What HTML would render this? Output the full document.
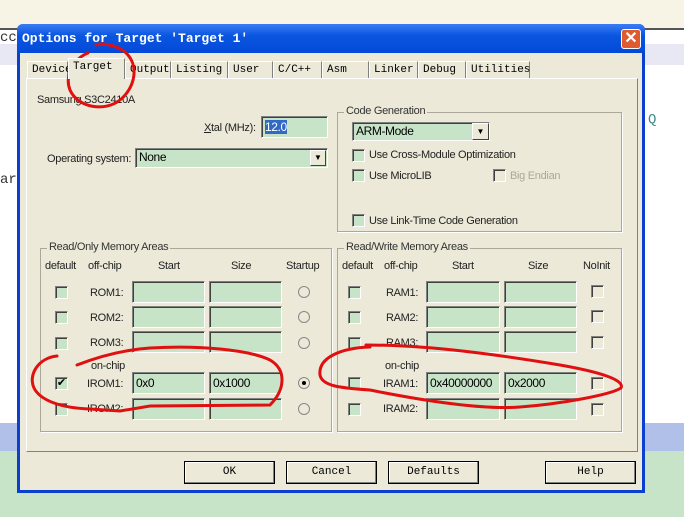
<!DOCTYPE html><html><head><meta charset="utf-8"><style>
*{margin:0;padding:0;box-sizing:border-box}
body{width:684px;height:517px;overflow:hidden;position:relative;background:#fff;font-family:"Liberation Sans",sans-serif;font-size:11px;color:#000}
.a{position:absolute}
.mono{font-family:"Liberation Mono",monospace}
.fld{position:absolute;background:#c8e4c8;border-top:1px solid #808080;border-left:1px solid #808080;border-right:1px solid #fff;border-bottom:1px solid #fff;box-shadow:inset 1px 1px 0 #404040;height:22px;padding:3px 3px;font-size:12px;letter-spacing:-0.4px}
.cb{position:absolute;width:13px;height:13px;background:#c8e4c8;border:1px solid #808080;border-right-color:#fff;border-bottom-color:#fff;box-shadow:inset 1px 1px 0 #404040}
.rd{position:absolute;width:12px;height:12px;border-radius:50%;border:1px solid #888;background:#ece9d8}
.grp{position:absolute;border:1px solid #aca899;box-shadow:1px 1px 0 #fff}
.gl{position:absolute;top:-8px;left:6px;background:#ece9d8;padding:0 2px;color:#333;letter-spacing:-0.3px}
.tab{position:absolute;top:61px;height:17px;border:1px solid #fff;border-right:1px solid #808080;border-bottom:none;font-family:"Liberation Mono",monospace;font-size:11px;padding:2px 4px;background:#ece9d8}
.btn{position:absolute;top:461px;width:91px;height:23px;border:1px solid #000;box-shadow:inset -1px -1px 0 #808080,inset 1px 1px 0 #fff;background:#ece9d8;font-family:"Liberation Mono",monospace;text-align:center;line-height:21px}
.lb{position:absolute;font-size:11px;color:#222;letter-spacing:-0.3px}
</style></head><body>
<div class="a" style="left:0;top:0;width:684px;height:28px;background:#f7f4e6"></div>
<div class="a" style="left:0;top:28px;width:684px;height:2px;background:#555"></div>
<div class="a" style="left:0;top:44px;width:684px;height:21px;background:#e8e8f4"></div>
<div class="a mono" style="left:0;top:30px;font-size:14px;color:#333">cc</div>
<div class="a mono" style="left:0;top:172px;font-size:14px;color:#333">ar</div>
<div class="a mono" style="left:648px;top:112px;font-size:14px;color:#3a8a8a">Q</div>
<div class="a" style="left:0;top:423px;width:684px;height:28px;background:#b0c0e8"></div>
<div class="a" style="left:0;top:451px;width:684px;height:66px;background:#c8e4c8"></div>
<div class="a" style="left:17px;top:24px;width:628px;height:469px;background:#0a3fd0;border-radius:6px 6px 0 0"></div>
<div class="a" style="left:17px;top:24px;width:628px;height:29px;background:linear-gradient(#3b7cf4,#0a56e0 40%,#0349d8);border-radius:6px 6px 0 0"></div>
<div class="a mono" style="left:22px;top:31px;color:#fff;font-weight:bold;font-size:13px">Options for Target 'Target 1'</div>
<div class="a" style="left:621px;top:29px;width:20px;height:20px;background:#e05a30;border:1px solid #fff;border-radius:3px;color:#fff;font-size:16px;line-height:18px;text-align:center;font-weight:bold">✕</div>
<div class="a" style="left:20px;top:53px;width:622px;height:437px;background:#ece9d8"></div>
<div class="a" style="left:26px;top:78px;width:612px;height:374px;border:1px solid #fff;border-right-color:#808080;border-bottom-color:#808080"></div>
<div class="tab" style="left:27px;width:41px">Device</div>
<div class="tab" style="left:68px;top:58px;height:21px;width:57px;z-index:2">Target</div>
<div class="tab" style="left:125px;width:46px">Output</div>
<div class="tab" style="left:171px;width:57px">Listing</div>
<div class="tab" style="left:228px;width:45px">User</div>
<div class="tab" style="left:273px;width:49px">C/C++</div>
<div class="tab" style="left:322px;width:47px">Asm</div>
<div class="tab" style="left:369px;width:49px">Linker</div>
<div class="tab" style="left:418px;width:48px">Debug</div>
<div class="tab" style="left:466px;width:64px">Utilities</div>
<div class="lb" style="left:37px;top:94px">Samsung S3C2410A</div>
<div class="lb" style="left:204px;top:122px"><u>X</u>tal (MHz):</div>
<div class="fld" style="left:261px;top:116px;width:67px"><span style="background:#316ac5;color:#fff">12.0</span></div>
<div class="lb" style="left:47px;top:153px">Operating system:</div>
<div class="fld" style="left:135px;top:148px;width:193px;height:20px;padding:1px 3px">None</div>
<div class="a" style="left:310px;top:150px;width:16px;height:16px;background:#ece9d8;border:1px solid #fff;border-right-color:#404040;border-bottom-color:#404040;font-size:8px;text-align:center;line-height:14px">▼</div>
<div class="grp" style="left:337px;top:112px;width:285px;height:120px"><span class="gl">Code Generation</span></div>
<div class="fld" style="left:352px;top:122px;width:138px;height:19px;padding:1px 3px">ARM-Mode</div>
<div class="a" style="left:472px;top:123px;width:17px;height:17px;background:#ece9d8;border:1px solid #fff;border-right-color:#404040;border-bottom-color:#404040;font-size:8px;text-align:center;line-height:15px">▼</div>
<div class="cb" style="left:352px;top:149px"></div><div class="lb" style="left:369px;top:149px">Use Cross-Module Optimization</div>
<div class="cb" style="left:352px;top:169px"></div><div class="lb" style="left:369px;top:170px">Use MicroLIB</div>
<div class="cb" style="left:493px;top:169px;background:#ece9d8"></div><div class="lb" style="left:510px;top:170px;color:#aca899">Big Endian</div>
<div class="cb" style="left:352px;top:214px"></div><div class="lb" style="left:369px;top:215px">Use Link-Time Code Generation</div>
<div class="grp" style="left:40px;top:248px;width:292px;height:184px"><span class="gl">Read/Only Memory Areas</span></div>
<div class="lb" style="left:45px;top:260px">default</div><div class="lb" style="left:88px;top:260px">off-chip</div><div class="lb" style="left:158px;top:260px">Start</div><div class="lb" style="left:231px;top:260px">Size</div><div class="lb" style="left:286px;top:260px">Startup</div>
<div class="grp" style="left:337px;top:248px;width:285px;height:184px"><span class="gl">Read/Write Memory Areas</span></div>
<div class="lb" style="left:342px;top:260px">default</div><div class="lb" style="left:384px;top:260px">off-chip</div><div class="lb" style="left:452px;top:260px">Start</div><div class="lb" style="left:528px;top:260px">Size</div><div class="lb" style="left:583px;top:260px">NoInit</div>
<div class="cb" style="left:55px;top:286px"></div><div class="lb" style="left:90px;top:287px">ROM1:</div><div class="fld" style="left:132px;top:281px;width:73px"></div><div class="fld" style="left:209px;top:281px;width:73px"></div><div class="rd" style="left:298px;top:286px"></div>
<div class="cb" style="left:55px;top:311px"></div><div class="lb" style="left:90px;top:312px">ROM2:</div><div class="fld" style="left:132px;top:306px;width:73px"></div><div class="fld" style="left:209px;top:306px;width:73px"></div><div class="rd" style="left:298px;top:311px"></div>
<div class="cb" style="left:55px;top:337px"></div><div class="lb" style="left:90px;top:337px">ROM3:</div><div class="fld" style="left:132px;top:331px;width:73px"></div><div class="fld" style="left:209px;top:331px;width:73px"></div><div class="rd" style="left:298px;top:337px"></div>
<div class="lb" style="left:91px;top:360px">on-chip</div>
<div class="cb" style="left:55px;top:377px;font-size:11px;line-height:10px;text-align:center">✔</div><div class="lb" style="left:87px;top:378px">IROM1:</div><div class="fld" style="left:132px;top:372px;width:73px">0x0</div><div class="fld" style="left:209px;top:372px;width:73px">0x1000</div><div class="rd" style="left:298px;top:377px"><div class="a" style="left:3px;top:3px;width:4px;height:4px;background:#000;border-radius:50%"></div></div>
<div class="cb" style="left:55px;top:403px"></div><div class="lb" style="left:87px;top:403px">IROM2:</div><div class="fld" style="left:132px;top:398px;width:73px"></div><div class="fld" style="left:209px;top:398px;width:73px"></div><div class="rd" style="left:298px;top:403px"></div>
<div class="cb" style="left:348px;top:286px"></div><div class="lb" style="left:386px;top:287px">RAM1:</div><div class="fld" style="left:426px;top:281px;width:74px"></div><div class="fld" style="left:504px;top:281px;width:73px"></div><div class="cb" style="left:591px;top:285px;background:#ece9d8"></div>
<div class="cb" style="left:348px;top:311px"></div><div class="lb" style="left:386px;top:312px">RAM2:</div><div class="fld" style="left:426px;top:306px;width:74px"></div><div class="fld" style="left:504px;top:306px;width:73px"></div><div class="cb" style="left:591px;top:310px;background:#ece9d8"></div>
<div class="cb" style="left:348px;top:337px"></div><div class="lb" style="left:386px;top:337px">RAM3:</div><div class="fld" style="left:426px;top:331px;width:74px"></div><div class="fld" style="left:504px;top:331px;width:73px"></div><div class="cb" style="left:591px;top:336px;background:#ece9d8"></div>
<div class="lb" style="left:385px;top:360px">on-chip</div>
<div class="cb" style="left:348px;top:377px"></div><div class="lb" style="left:383px;top:378px">IRAM1:</div><div class="fld" style="left:426px;top:372px;width:74px">0x40000000</div><div class="fld" style="left:504px;top:372px;width:73px">0x2000</div><div class="cb" style="left:591px;top:377px;background:#ece9d8"></div>
<div class="cb" style="left:348px;top:403px"></div><div class="lb" style="left:383px;top:403px">IRAM2:</div><div class="fld" style="left:426px;top:398px;width:74px"></div><div class="fld" style="left:504px;top:398px;width:73px"></div><div class="cb" style="left:591px;top:403px;background:#ece9d8"></div>
<div class="btn" style="left:184px">OK</div>
<div class="btn" style="left:286px">Cancel</div>
<div class="btn" style="left:388px">Defaults</div>
<div class="btn" style="left:545px">Help</div>
<svg class="a" style="left:0;top:0" width="684" height="517" fill="none" stroke="#e01010" stroke-width="3" stroke-linecap="round">
<path d="M88 53 C75 58 64 75 70 90 C78 108 105 112 120 100 C135 88 140 65 125 52 C115 44 100 43 96 45"/>
<path d="M57 356 C38 358 28 375 34 388 C40 400 60 408 90 409 L120 411 L150 406 L270 405 C285 390 287 370 270 360 C250 350 200 345 150 348 C120 350 95 358 77 365"/>
<path d="M370 347 C340 348 318 358 320 375 C322 386 340 388 370 390 C420 400 480 410 520 407 C560 404 610 395 621 388 C625 380 600 372 560 365 C500 355 430 345 366 345"/>
</svg>
</body></html>
